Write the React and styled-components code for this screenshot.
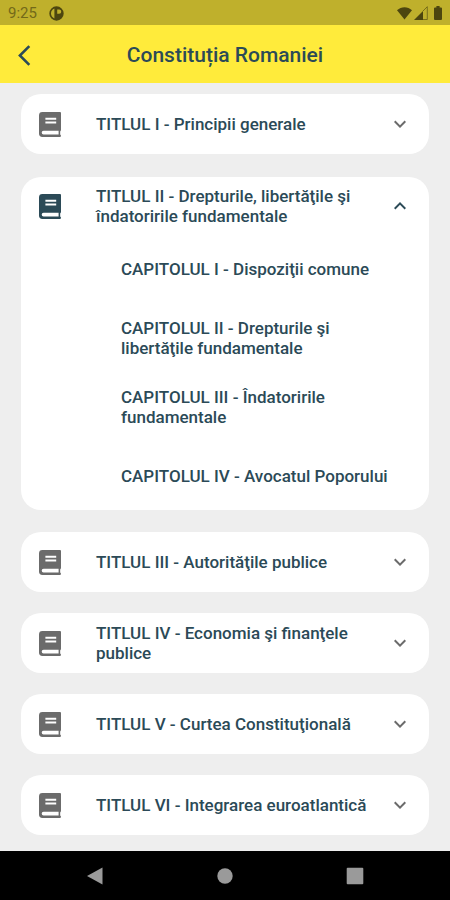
import styled, { createGlobalStyle } from "styled-components";
import { useState } from "react";
import { MdKeyboardArrowDown, MdKeyboardArrowUp } from "react-icons/md";

const titles = [
  { id: 1, name: "TITLUL I - Principii generale", chapters: [] },
  {
    id: 2,
    name: "TITLUL II - Drepturile, libertăţile şi îndatoririle fundamentale",
    chapters: [
      "CAPITOLUL I - Dispoziţii comune",
      "CAPITOLUL II - Drepturile şi libertăţile fundamentale",
      "CAPITOLUL III - Îndatoririle fundamentale",
      "CAPITOLUL IV - Avocatul Poporului",
    ],
  },
  { id: 3, name: "TITLUL III - Autorităţile publice", chapters: [] },
  { id: 4, name: "TITLUL IV - Economia şi finanţele publice", chapters: [] },
  { id: 5, name: "TITLUL V - Curtea Constituţională", chapters: [] },
  { id: 6, name: "TITLUL VI - Integrarea euroatlantică", chapters: [] },
];

const App = () => {
  const [openId, setOpenId] = useState(2);

  const handleToggle = (id) => {
    setOpenId(openId === id ? null : id);
  };

  return (
    <Screen>
      <GlobalStyle />
      <StatusBar>
        <StatusGroup>
          <Clock>9:25</Clock>
          <svg width="15" height="15" viewBox="0 0 15 15" aria-hidden="true">
            <path
              fillRule="evenodd"
              d="M7.5.3a7.2 7.2 0 1 1 0 14.4 7.2 7.2 0 0 1 0-14.4zM5.4 2.6C3.3 3.5 2 5.3 2 7.5s1.3 4 3.4 4.9zM8.2 3.5v4.3h1.9a2.15 2.15 0 0 0 0-4.3z"
              fill="currentColor"
            />
          </svg>
        </StatusGroup>
        <StatusGroup $tight>
          <svg width="15" height="13" viewBox="0 0 15 13" aria-hidden="true">
            <path d="M0 3.2C4.4-.9 10.6-.9 15 3.2L7.5 12.6z" fill="currentColor" />
          </svg>
          <svg width="14" height="14" viewBox="0 0 14 14" aria-hidden="true">
            <path d="M0 14 9 5v9z" fill="currentColor" />
            <path d="M9 5l4.3-4.3v12.8H9" fill="none" stroke="currentColor" strokeWidth="1" opacity=".6" />
          </svg>
          <Battery width="8" height="14" viewBox="0 0 8 14" aria-hidden="true">
            <path d="M2.4 0h3.2v1.4H7a1 1 0 0 1 1 1V13a1 1 0 0 1-1 1H1a1 1 0 0 1-1-1V2.4a1 1 0 0 1 1-1h1.4z" fill="currentColor" />
          </Battery>
        </StatusGroup>
      </StatusBar>
      <Header>
        <BackButton aria-label="Înapoi">
          <svg width="25" height="25" viewBox="0 0 24 24" aria-hidden="true">
            <path d="M17.51 3.87 15.73 2.1 5.84 12l9.9 9.9 1.77-1.77L9.38 12z" fill="currentColor" />
          </svg>
        </BackButton>
        <PageTitle>Constituția Romaniei</PageTitle>
      </Header>
      <TitleList>
        {titles.map((title) => {
          const open = openId === title.id;
          return (
            <Card key={title.id} $open={open}>
              <CardButton
                $open={open}
                aria-expanded={open}
                onClick={() => handleToggle(title.id)}
              >
                <BookIcon $open={open} viewBox="0 0 22 25" aria-hidden="true">
                  <path
                    fillRule="evenodd"
                    d="M3.4 0H21a1 1 0 0 1 1 1v16.9c0 .5-.3.9-.7 1.1-.2 1.2-.2 2.7 0 3.8.4.2.7.5.7 1a1.2 1.2 0 0 1-1.2 1.2H3.4A3.4 3.4 0 0 1 0 21.6V3.4A3.4 3.4 0 0 1 3.4 0zM6.4 5.8v2h10.8v-2zM6.4 9.5v2h10.8v-2zM4.6 18.7a1.9 1.9 0 0 0 0 3.8h15v-3.8z"
                    fill="currentColor"
                  />
                </BookIcon>
                <CardName>{title.name}</CardName>
                {open ? (
                  <MdKeyboardArrowUp size={24} color="#2b4a57" />
                ) : (
                  <MdKeyboardArrowDown size={24} color="#6b6b6b" />
                )}
              </CardButton>
              {open && title.chapters.length > 0 && (
                <ChapterList>
                  {title.chapters.map((chapter) => (
                    <li key={chapter}>
                      <ChapterLink href="#">{chapter}</ChapterLink>
                    </li>
                  ))}
                </ChapterList>
              )}
            </Card>
          );
        })}
      </TitleList>
      <NavBar>
        <NavButton aria-label="Back">
          <svg width="18" height="18" viewBox="0 0 18 18" aria-hidden="true">
            <path d="M1 9 16.5.5v17z" fill="currentColor" />
          </svg>
        </NavButton>
        <NavButton aria-label="Home">
          <svg width="18" height="18" viewBox="0 0 18 18" aria-hidden="true">
            <circle cx="9" cy="9" r="7.7" fill="currentColor" />
          </svg>
        </NavButton>
        <NavButton aria-label="Recents">
          <svg width="18" height="18" viewBox="0 0 18 18" aria-hidden="true">
            <rect x=".7" y=".7" width="16.6" height="16.6" rx="1" fill="currentColor" />
          </svg>
        </NavButton>
      </NavBar>
    </Screen>
  );
};

const GlobalStyle = createGlobalStyle`
  * {
    box-sizing: border-box;
  }

  body {
    margin: 0;
    background-color: #eeeeee;
    font-family: Roboto, "Liberation Sans", sans-serif;
  }

  button {
    border: none;
    background: none;
    padding: 0;
    font: inherit;
    color: inherit;
    cursor: pointer;
  }
`;

const Screen = styled.div`
  display: flex;
  flex-direction: column;
  min-height: 100vh;
  color: #2b4a57;
`;

const StatusBar = styled.div`
  display: flex;
  align-items: center;
  justify-content: space-between;
  height: 25px;
  padding: 1px 8px 0;
  background-color: #bfb02c;
  color: #4d460f;
`;

const StatusGroup = styled.div`
  display: flex;
  align-items: center;
  gap: ${({ $tight }) => ($tight ? "2px" : "12px")};
`;

const Clock = styled.span`
  font-size: 15px;
  line-height: 20px;
  color: #736919;
`;

const Battery = styled.svg`
  margin-left: 4px;
`;

const Header = styled.header`
  display: grid;
  grid-template-columns: 48px 1fr 48px;
  align-items: center;
  height: 58px;
  padding-top: 2px;
  background-color: #ffeb3b;
`;

const BackButton = styled.button`
  display: flex;
  align-items: center;
  justify-content: center;
  height: 48px;
`;

const PageTitle = styled.h1`
  margin: 0;
  font-size: 21px;
  font-weight: 500;
  line-height: 24px;
  text-align: center;
`;

const TitleList = styled.main`
  flex: 1;
  padding: 11px 21px 15px;
`;

const Card = styled.section`
  margin: ${({ $open }) => ($open ? "23px 0 22px" : "0 0 21px")};
  border-radius: 20px;
  background-color: #fff;

  &:last-child {
    margin-bottom: 0;
  }
`;

const CardButton = styled.button`
  display: flex;
  align-items: center;
  width: 100%;
  min-height: ${({ $open }) => ($open ? "58px" : "60px")};
  padding: 0 17px 0 18px;
  text-align: left;
`;

const BookIcon = styled.svg`
  flex: none;
  width: 22px;
  height: 25px;
  color: ${({ $open }) => ($open ? "#2b4a57" : "#6b6b6b")};
`;

const CardName = styled.span`
  flex: 1;
  padding: 0 16px 0 35px;
  font-size: 17px;
  font-weight: 500;
  line-height: 20px;
`;

const ChapterList = styled.ul`
  display: flex;
  flex-direction: column;
  gap: 1px;
  margin: 0;
  padding: 0 24px 0 100px;
  list-style: none;
`;

const ChapterLink = styled.a`
  display: flex;
  align-items: center;
  min-height: 68px;
  font-size: 17px;
  font-weight: 500;
  line-height: 20px;
  color: inherit;
  text-decoration: none;
`;

const NavBar = styled.nav`
  display: flex;
  justify-content: center;
  height: 49px;
  background-color: #000;
  color: #9a9a9a;
`;

const NavButton = styled.button`
  display: flex;
  align-items: center;
  justify-content: center;
  width: 130px;
`;

export default App;
